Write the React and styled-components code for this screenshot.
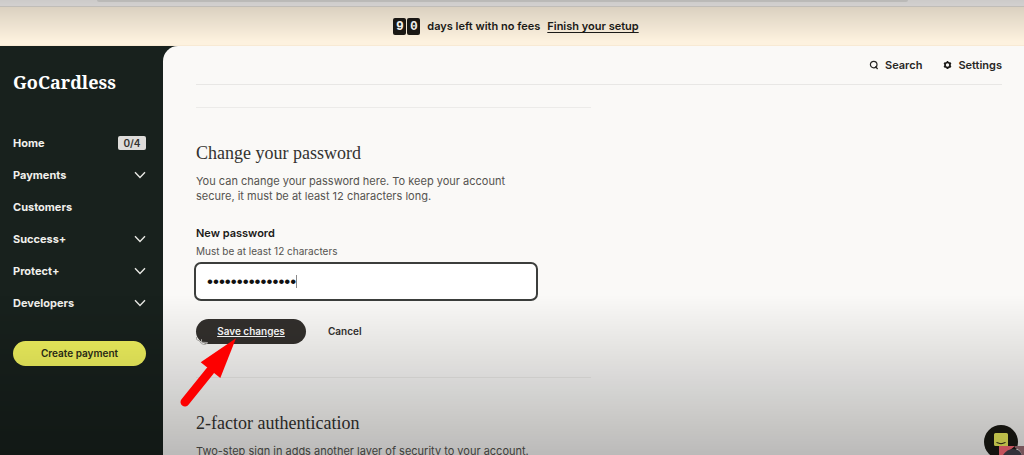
import React, { useState } from "react";
import styled, { createGlobalStyle } from "styled-components";

const GlobalStyle = createGlobalStyle`
  *, *::before, *::after { box-sizing: border-box; }
  html, body { margin: 0; padding: 0; }
  body {
    font-family: Inter, "Liberation Sans", sans-serif;
    font-size: 11px;
    line-height: 16px;
    color: #1c1b18;
    background: #18211d;
  }
  h1, h2, p, ul { margin: 0; padding: 0; }
  button, input { font: inherit; color: inherit; }
`;

const Page = styled.div`
  height: 100vh;
  overflow: hidden;
  display: flex;
  flex-direction: column;
`;

const BrowserEdge = styled.div`
  flex: none;
  height: 7px;
  padding: 0 116px 0 97px;
  background: #f5f2f1;
  border-bottom: 1px solid #dfdbd6;
`;

const AddressBar = styled.div`
  height: 2px;
  background: #dedddb;
  border-radius: 0 0 4px 4px;
`;

const Banner = styled.div`
  flex: none;
  height: 39px;
  display: flex;
  align-items: center;
  justify-content: center;
  gap: 7px;
  padding-left: 8px;
  background: #fdf2df;
  border-bottom: 1px solid #f8ead4;
  font-weight: 600;
`;

const Counter = styled.span`
  display: flex;
  gap: 1px;
`;

const Digit = styled.span`
  width: 13px;
  height: 17px;
  border-radius: 2px;
  background: #1c1a16;
  color: #fff;
  font-family: "Liberation Mono", monospace;
  font-size: 13px;
  font-weight: 700;
  line-height: 17px;
  text-align: center;
`;

const BannerLink = styled.a`
  color: inherit;
  text-underline-offset: 2px;
`;

const Body = styled.div`
  flex: 1;
  min-height: 0;
  display: flex;
`;

const Sidebar = styled.aside`
  flex: none;
  width: 163px;
  padding: 24px 17px 0 13px;
  color: #f1f0ec;
`;

const Logo = styled.a`
  display: block;
  color: #fff;
  font-family: "Noto Serif", "Liberation Serif", serif;
  font-size: 18px;
  font-weight: 700;
  line-height: 24px;
  text-decoration: none;
`;

const NavList = styled.ul`
  list-style: none;
  margin-top: 33px;
`;

const NavItem = styled.li`
  height: 32px;
`;

const NavLink = styled.a`
  display: flex;
  align-items: center;
  justify-content: space-between;
  height: 100%;
  color: inherit;
  font-weight: 700;
  text-decoration: none;
`;

const Badge = styled.span`
  width: 28px;
  height: 14px;
  border-radius: 2px;
  background: #dedcda;
  color: #33322f;
  font-size: 10px;
  font-weight: 600;
  line-height: 14px;
  text-align: center;
`;

const PillButton = styled.button`
  display: block;
  height: 25px;
  padding: 0 0 2px;
  border: 0;
  border-radius: 13px;
  cursor: pointer;
`;

const CreateButton = styled(PillButton)`
  width: 100%;
  margin-top: 22px;
  background: #f1f35e;
  color: #2c2d17;
  font-size: 10px;
  font-weight: 600;
`;

const SaveButton = styled(PillButton)`
  width: 110px;
  background: #33302d;
  color: #fff;
  font-size: 10px;
  font-weight: 600;
  text-decoration: underline;
  text-underline-offset: 1px;
`;

const CancelButton = styled(PillButton)`
  padding: 0 22px 2px;
  background: none;
  color: #33302f;
  font-size: 10px;
  font-weight: 600;
`;

const Main = styled.main`
  flex: 1;
  min-width: 0;
  padding: 0 22px 0 33px;
  background: #faf9f7;
  border-top-left-radius: 15px;
`;

const TopBar = styled.div`
  height: 39px;
  display: flex;
  align-items: center;
  justify-content: flex-end;
  gap: 21px;
  border-bottom: 1px solid #e8e7e5;
`;

const TopLink = styled.a`
  display: flex;
  align-items: center;
  gap: 6px;
  color: #282725;
  font-weight: 600;
  text-decoration: none;
`;

const Content = styled.div`
  max-width: 395px;
`;

const Section = styled.section`
  margin-top: ${(p) => (p.$first ? "22px" : "33px")};
  border-top: 1px solid #ecebe9;
  padding-top: 33px;
`;

const Title = styled.h2`
  color: #33322f;
  font-family: "Liberation Serif", serif;
  font-size: 18px;
  font-weight: 400;
  line-height: 24px;
`;

const Copy = styled.p`
  max-width: 345px;
  margin-top: 9px;
  color: #55534f;
  font-size: 11px;
  line-height: 15px;
`;

const Field = styled.form`
  margin-top: 21px;
`;

const Label = styled.label`
  display: block;
  font-weight: 600;
`;

const Hint = styled.p`
  margin-top: 2px;
  color: #55534f;
  font-size: 10px;
`;

const PasswordBox = styled.div`
  position: relative;
  max-width: 342px;
  margin: 3px 0 0 -2px;
  width: 344px;
  max-width: 100%;
`;

const PasswordInput = styled.input`
  display: block;
  width: 100%;
  height: 39px;
  padding: 0 11px;
  border: 2px solid #3c3e3c;
  border-radius: 7px;
  outline: none;
  background: #fff;
  color: #111;
  caret-color: transparent;
  font-family: "Liberation Sans", sans-serif;
  font-size: 17px;
`;

const Caret = styled.span`
  position: absolute;
  left: 102px;
  top: 13px;
  width: 1px;
  height: 13px;
  background: #8a8a8a;
`;

const Actions = styled.div`
  display: flex;
  margin-top: 18px;
`;

const ChatButton = styled.button`
  position: fixed;
  right: 6px;
  bottom: -4px;
  width: 34px;
  height: 34px;
  padding: 0;
  border: 0;
  border-radius: 50%;
  background: #1b1a14;
`;

const Shade = styled.div`
  position: fixed;
  inset: 0;
  pointer-events: none;
  background:
    linear-gradient(to bottom, rgba(0, 0, 0, 0.16), rgba(0, 0, 0, 0)) top / 100% 42px no-repeat,
    linear-gradient(to top, rgba(0, 0, 0, 0.25), rgba(0, 0, 0, 0)) bottom / 100% 160px no-repeat;
`;

const Pointer = styled.svg`
  position: absolute;
  left: 180px;
  top: 334px;
  pointer-events: none;
`;

const Watermark = styled.svg`
  position: fixed;
  right: 0;
  bottom: 0;
  pointer-events: none;
`;

const Chevron = () => (
  <svg width="12" height="8" viewBox="0 0 12 8" fill="none" stroke="#e8e8e4" strokeWidth="1.4" aria-hidden="true">
    <path d="M1 1.2 6 6.4l5-5.2" />
  </svg>
);

const SearchIcon = () => (
  <svg width="10" height="10" viewBox="0 0 10 10" fill="none" stroke="#282725" strokeWidth="1.2" aria-hidden="true">
    <circle cx="4.7" cy="4.6" r="3.3" />
    <path d="m6.4 6.4 2.2 2.6" />
  </svg>
);

const GearIcon = () => (
  <svg width="9" height="10" viewBox="0 0 10 10" fill="none" stroke="#1c1b18" aria-hidden="true">
    <circle cx="5" cy="5" r="2.8" strokeWidth="1.9" />
    <path strokeWidth="1.7" d="M5 .5v1.6M5 7.9v1.6M1.1 2.8l1.4.8M7.5 6.4l1.4.8M1.1 7.2l1.4-.8M7.5 3.6l1.4-.8" />
  </svg>
);

const items = [
  { name: "Home", badge: "0/4" },
  { name: "Payments", menu: true },
  { name: "Customers" },
  { name: "Success+", menu: true },
  { name: "Protect+", menu: true },
  { name: "Developers", menu: true },
];

export default function App() {
  const [password, setPassword] = useState("correcthorse123");
  return (
    <Page>
      <GlobalStyle />
      <BrowserEdge>
        <AddressBar />
      </BrowserEdge>
      <Banner>
        <Counter>
          <Digit>9</Digit>
          <Digit>0</Digit>
        </Counter>
        <span>days left with no fees</span>
        <BannerLink href="#setup">Finish your setup</BannerLink>
      </Banner>
      <Body>
        <Sidebar>
          <Logo href="#home">GoCardless</Logo>
          <nav>
            <NavList>
              {items.map((item) => (
                <NavItem key={item.name}>
                  <NavLink href={"#" + item.name.toLowerCase()}>
                    {item.name}
                    {item.badge && <Badge>{item.badge}</Badge>}
                    {item.menu && <Chevron />}
                  </NavLink>
                </NavItem>
              ))}
            </NavList>
          </nav>
          <CreateButton type="button">Create payment</CreateButton>
        </Sidebar>
        <Main>
          <TopBar>
            <TopLink href="#search">
              <SearchIcon />
              Search
            </TopLink>
            <TopLink href="#settings">
              <GearIcon />
              Settings
            </TopLink>
          </TopBar>
          <Content>
            <Section $first>
              <Title>Change your password</Title>
              <Copy>
                You can change your password here. To keep your account secure, it must be at least 12 characters long.
              </Copy>
              <Field onSubmit={(e) => e.preventDefault()}>
                <Label htmlFor="new-password">New password</Label>
                <Hint id="password-hint">Must be at least 12 characters</Hint>
                <PasswordBox>
                  <PasswordInput
                    id="new-password"
                    type="password"
                    aria-describedby="password-hint"
                    value={password}
                    onChange={(e) => setPassword(e.target.value)}
                  />
                  <Caret aria-hidden="true" />
                </PasswordBox>
                <Actions>
                  <SaveButton type="submit">Save changes</SaveButton>
                  <CancelButton type="button">Cancel</CancelButton>
                </Actions>
              </Field>
            </Section>
            <Section>
              <Title>2-factor authentication</Title>
              <Copy>Two-step sign in adds another layer of security to your account.</Copy>
            </Section>
          </Content>
        </Main>
      </Body>
      <ChatButton type="button" aria-label="Open chat">
        <svg width="14" height="14" viewBox="0 0 14 14" aria-hidden="true">
          <path d="M1.5 0h11Q14 0 14 1.5V14l-2-1H1.5Q0 13 0 11.500V1.5Q0 0 1.500 0Z" fill="#f1f35e" />
          <path d="M2.500 9.500q4.500 2.600 9 0" fill="none" stroke="#1b1a14" />
        </svg>
      </ChatButton>
      <Shade />
      <Watermark width="25" height="9" viewBox="0 0 25 9" aria-hidden="true">
        <path d="M0 0h16L5 9H0Z" fill="#c4525c" />
        <path d="M4 9Q8 3 14 3q7 0 9 6Z" fill="#33313a" />
        <path d="M16 0h9v9h-2q-2-6-7-7Z" fill="#76545a" />
      </Watermark>
      <Pointer width="60" height="76" viewBox="0 0 60 76" aria-hidden="true">
        <path d="M16.500 3v2.500l3 1.500q1.500 3.500 4.500 3.500 3 0 3.500-2l-6-.3v-3" fill="none" stroke="#a5a3a0" />
        <path d="M5 68 30 37" fill="none" stroke="#fd0000" strokeWidth="9" strokeLinecap="round" />
        <path d="M56 4.300 20.700 28.300 40.300 44Z" fill="#fd0000" />
      </Pointer>
    </Page>
  );
}
